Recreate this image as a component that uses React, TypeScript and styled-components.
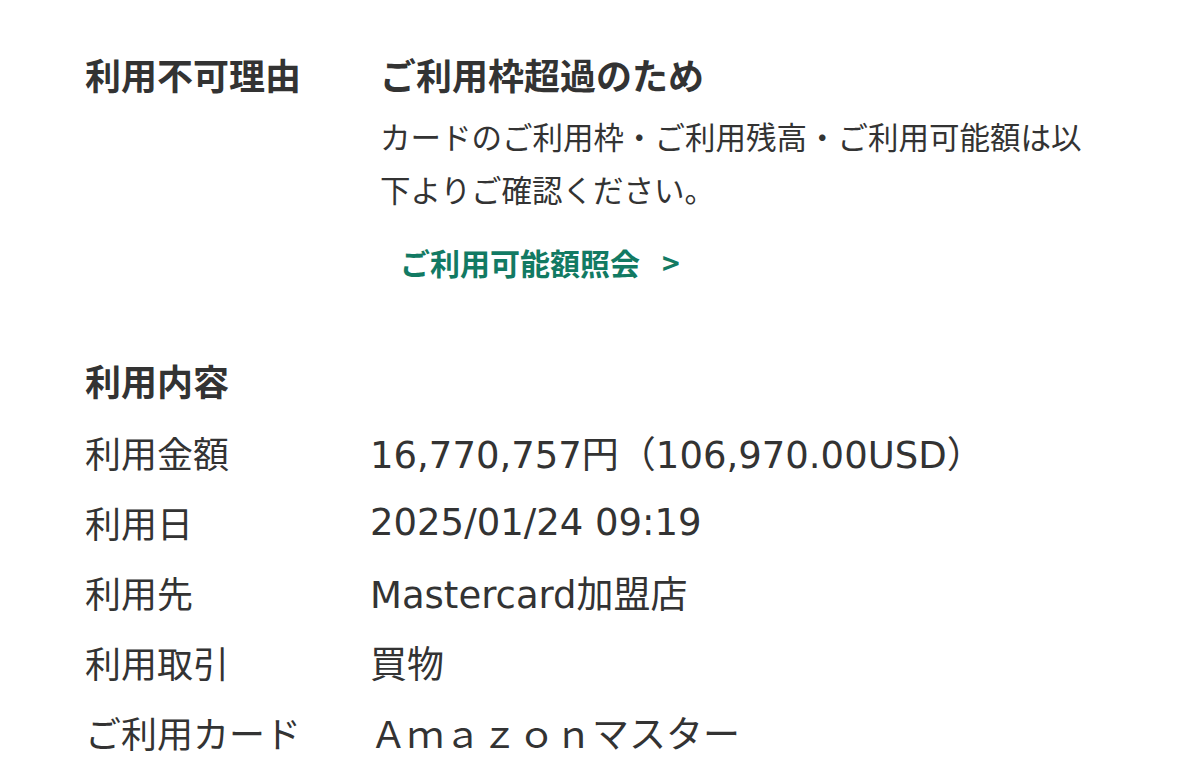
import * as React from "react"
import styled, { createGlobalStyle } from "styled-components"

const GlobalStyle = createGlobalStyle`
  body {
    margin: 0;
    background: #fff;
    color: #333;
    font-family: "Noto Sans CJK JP", sans-serif;
  }
`

const Page = styled.main`
  padding: 49px 0 0 85px;
`

const ReasonBlock = styled.section`
  display: grid;
  grid-template-columns: 295px 1fr;
`

const ReasonLabel = styled.h2`
  margin: 0;
  font-size: 36px;
  line-height: 50px;
  font-weight: 700;
`

const ReasonBody = styled.div`
  display: flex;
  flex-direction: column;
  align-items: flex-start;
`

const ReasonTitle = styled.p`
  margin: 0;
  font-size: 36px;
  line-height: 50px;
  font-weight: 700;
`

const ReasonText = styled.p`
  margin: 11px 0 0;
  width: 712px;
  font-size: 30.5px;
  line-height: 53px;
`

const InquiryLink = styled.a`
  display: flex;
  align-items: center;
  gap: 22px;
  margin: 26px 0 0 20px;
  font-size: 30px;
  line-height: 40px;
  font-weight: 700;
  color: #127a63;
  text-decoration: none;
`

const SectionHeading = styled.h2`
  margin: 73px 0 0;
  font-size: 36px;
  line-height: 50px;
  font-weight: 700;
`

const DetailList = styled.dl`
  display: grid;
  grid-template-columns: 285px 1fr;
  grid-auto-rows: 70px;
  align-items: center;
  margin: 12px 0 0;
  font-size: 36px;
`

const Term = styled.dt`
  margin: 0;
`

const Value = styled.dd`
  margin: 0;
  font-family: "DejaVu Sans", "Noto Sans CJK JP", sans-serif;
  font-size: 37px;
`

const details = [
  ["利用金額", "16,770,757円（106,970.00USD）"],
  ["利用日", "2025/01/24 09:19"],
  ["利用先", "Mastercard加盟店"],
  ["利用取引", "買物"],
  ["ご利用カード", "Ａｍａｚｏｎマスター"],
]

const App: React.FC = () => (
  <>
    <GlobalStyle />
    <Page>
      <ReasonBlock>
        <ReasonLabel>利用不可理由</ReasonLabel>
        <ReasonBody>
          <ReasonTitle>ご利用枠超過のため</ReasonTitle>
          <ReasonText>
            カードのご利用枠・ご利用残高・ご利用可能額は以下よりご確認ください。
          </ReasonText>
          <InquiryLink href="#">
            ご利用可能額照会<span>&gt;</span>
          </InquiryLink>
        </ReasonBody>
      </ReasonBlock>

      <SectionHeading>利用内容</SectionHeading>
      <DetailList>
        {details.map(([term, value]) => (
          <React.Fragment key={term}>
            <Term>{term}</Term>
            <Value>{value}</Value>
          </React.Fragment>
        ))}
      </DetailList>
    </Page>
  </>
)

export default App
